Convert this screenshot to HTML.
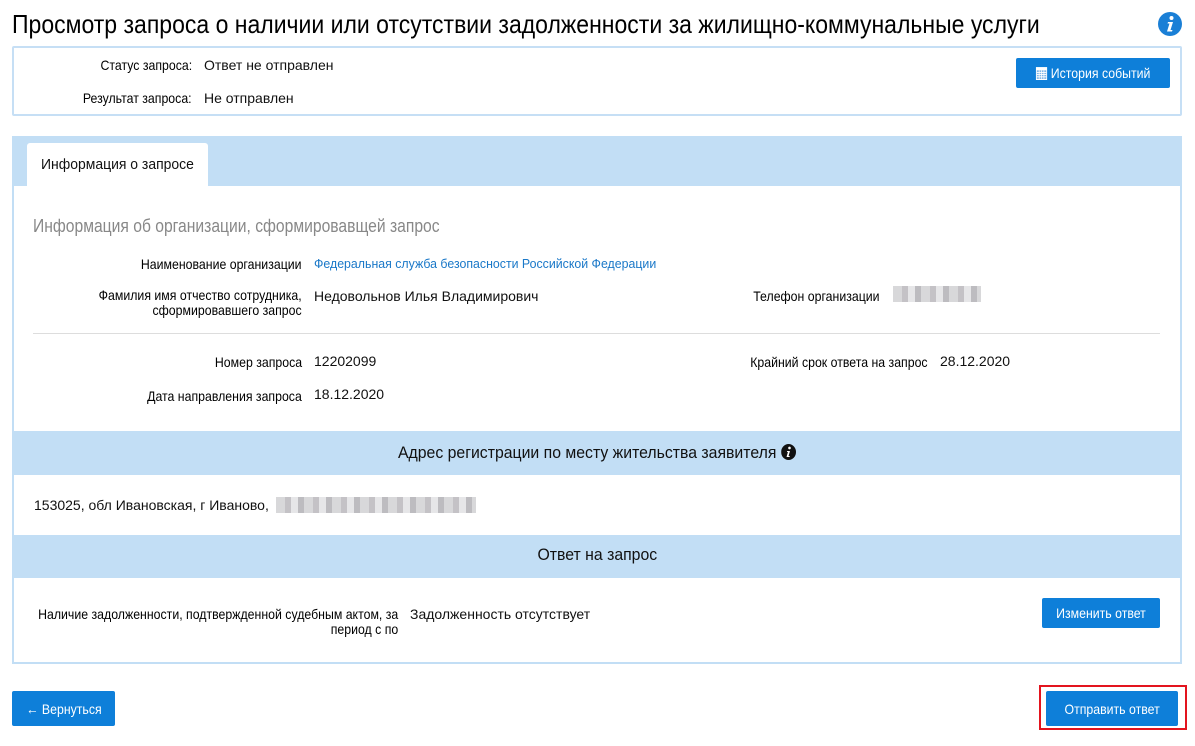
<!DOCTYPE html>
<html><head><meta charset="utf-8"><style>
*{margin:0;padding:0;box-sizing:border-box}
body{width:1195px;height:746px;background:#fff;position:relative;overflow:hidden;font-family:"Liberation Sans",sans-serif;color:#111}
.a{position:absolute;white-space:nowrap}
.s{display:inline-block}
.L{transform-origin:left center}
.R{transform-origin:right center}
.C{transform-origin:center center}
.lab{font-size:14px;text-align:right;color:#000}
.lab .s{transform:scaleX(.88);transform-origin:right center}
.val{font-size:14px;color:#111}
.btn{position:absolute;background:#0e7fd9;color:#fff;border-radius:2px;font-size:14px;display:flex;align-items:center;justify-content:center;white-space:nowrap}
.btn .s{transform:scaleX(.88)}
.blur{position:absolute;background:repeating-linear-gradient(90deg,#d8d8da 0 9px,#c4c2c6 9px 15px,#e6e6e8 15px 22px,#bdbcc0 22px 28px)}
</style></head><body>
<div class="a" style="left:12px;top:9px;font-size:26px;color:#000"><span class="s L" style="transform:scaleX(.885)">Просмотр запроса о наличии или отсутствии задолженности за жилищно-коммунальные услуги</span></div>
<svg class="a" style="left:1157px;top:11px" width="26" height="26" viewBox="0 0 26 26"><circle cx="13" cy="13" r="12" fill="#1a7fd6"/><circle cx="14.5" cy="7" r="2" fill="#fff"/><path d="M11 11h5l-2.5 8h2l-.5 1.5h-5l2.5-8h-2z" fill="#fff"/></svg>
<div class="a" style="left:12px;top:46px;width:1170px;height:70px;border:2px solid #c6dff5;border-radius:2px"></div>
<div class="a lab" style="left:40px;top:57px;width:152px"><span class="s">Статус запроса:</span></div>
<div class="a val" style="left:204px;top:57px">Ответ не отправлен</div>
<div class="a lab" style="left:40px;top:90px;width:152px"><span class="s">Результат запроса:</span></div>
<div class="a val" style="left:204px;top:90px">Не отправлен</div>
<div class="btn" style="left:1016px;top:58px;width:154px;height:30px"><span class="s C"><svg width="13" height="14" viewBox="0 0 12 13" style="margin-right:4px;vertical-align:-2px"><rect x="0" y="1" width="12" height="12" fill="#fff"/><rect x="1" y="4" width="10" height="8" fill="#7fb6e8"/><path d="M1 6h10M1 8h10M1 10h10M3.5 4v8M6 4v8M8.5 4v8" stroke="#fff" stroke-width=".8"/></svg>История событий</span></div>

<div class="a" style="left:12px;top:136px;width:1170px;height:528px;background:#c2def5"></div>
<div class="a" style="left:14px;top:186px;width:1166px;height:476px;background:#fff"></div>
<div class="a" style="left:27px;top:143px;width:181px;height:44px;background:#fff;border-radius:3px 3px 0 0"></div>
<div class="a" style="left:41px;top:156px;font-size:15px;color:#111"><span class="s L" style="transform:scaleX(.93)">Информация о запросе</span></div>

<div class="a" style="left:33px;top:216px;font-size:18px;color:#888"><span class="s L" style="transform:scaleX(.87)">Информация об организации, сформировавщей запрос</span></div>
<div class="a lab" style="left:60px;top:256px;width:242px"><span class="s">Наименование организации</span></div>
<div class="a" style="left:314px;top:256px;font-size:13px;color:#1a78c8"><span class="s L" style="transform:scaleX(.95)">Федеральная служба безопасности Российской Федерации</span></div>
<div class="a lab" style="left:40px;top:288px;width:262px;line-height:15px"><span class="s">Фамилия имя отчество сотрудника,<br>сформировавшего запрос</span></div>
<div class="a val" style="left:314px;top:288px">Недовольнов Илья Владимирович</div>
<div class="a lab" style="left:700px;top:288px;width:180px"><span class="s">Телефон организации</span></div>
<div class="blur" style="left:893px;top:286px;width:88px;height:16px"></div>
<div class="a" style="left:33px;top:333px;width:1127px;height:1px;background:#ddd"></div>
<div class="a lab" style="left:60px;top:354px;width:242px"><span class="s">Номер запроса</span></div>
<div class="a val" style="left:314px;top:353px">12202099</div>
<div class="a lab" style="left:700px;top:354px;width:228px"><span class="s">Крайний срок ответа на запрос</span></div>
<div class="a val" style="left:940px;top:353px">28.12.2020</div>
<div class="a lab" style="left:60px;top:388px;width:242px"><span class="s">Дата направления запроса</span></div>
<div class="a val" style="left:314px;top:386px">18.12.2020</div>

<div class="a" style="left:12px;top:431px;width:1170px;height:44px;background:#c2def5"></div>
<div class="a" style="left:12px;top:443px;width:1170px;text-align:center;font-size:17px;color:#111"><span class="s C" style="transform:scaleX(.93)">Адрес регистрации по месту жительства заявителя <svg width="16" height="16" viewBox="0 0 16 16" style="vertical-align:-2px"><circle cx="8" cy="8" r="8" fill="#111"/><circle cx="9" cy="4" r="1.4" fill="#fff"/><path d="M6.5 7h3l-1.5 5h1.3l-.3 1h-3.2l1.5-5h-1.1z" fill="#fff"/></svg></span></div>
<div class="a val" style="left:34px;top:497px">153025, обл Ивановская, г Иваново,</div>
<div class="blur" style="left:276px;top:497px;width:200px;height:16px"></div>

<div class="a" style="left:12px;top:535px;width:1170px;height:43px;background:#c2def5"></div>
<div class="a" style="left:12px;top:545px;width:1170px;text-align:center;font-size:17px;color:#111"><span class="s C" style="transform:scaleX(.93)">Ответ на запрос</span></div>
<div class="a lab" style="left:-40px;top:607px;width:438px;line-height:15px"><span class="s">Наличие задолженности, подтвержденной судебным актом, за<br>период с по</span></div>
<div class="a val" style="left:410px;top:606px">Задолженность отсутствует</div>
<div class="btn" style="left:1042px;top:598px;width:118px;height:30px"><span class="s C">Изменить ответ</span></div>

<div class="btn" style="left:12px;top:691px;width:103px;height:35px"><span class="s C">← Вернуться</span></div>
<div class="a" style="left:1039px;top:685px;width:148px;height:45px;border:2px solid #e3141e"></div>
<div class="btn" style="left:1046px;top:691px;width:132px;height:35px"><span class="s C">Отправить ответ</span></div>
</body></html>
